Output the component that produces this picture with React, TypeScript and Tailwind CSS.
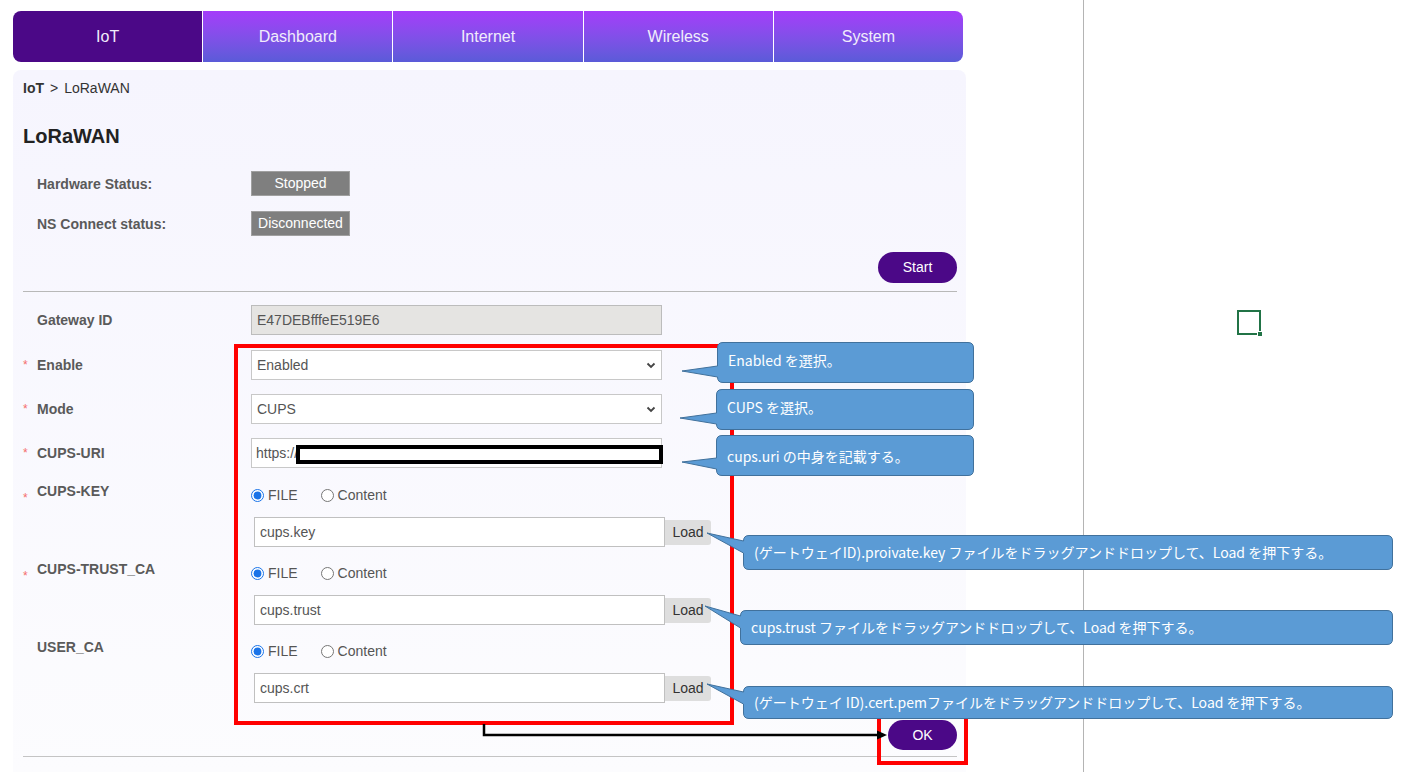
import type { ReactNode } from 'react';

const tabs = ['IoT', 'Dashboard', 'Internet', 'Wireless', 'System'];

const Nav = () => (
  <div className="flex h-[51px] w-[950px] overflow-hidden rounded-lg">
    {tabs.map((t, i) =>
      i === 0 ? (
        <div key={t} className="flex flex-1 items-center justify-center bg-[#4b0887] text-[16px] text-[#f1ecfb]">
          {t}
        </div>
      ) : (
        <div
          key={t}
          className="flex flex-1 items-center justify-center border-l border-white bg-linear-to-b from-[#a43bfa] to-[#5a5bd8] text-[16px] text-[#f1ecfb]"
        >
          {t}
        </div>
      )
    )}
  </div>
);

const Label = ({ text, req, low }: { text: string; req?: boolean; low?: boolean }) => (
  <div className={`flex w-[228px] shrink-0 ${low ? 'items-start' : 'items-center'}`}>
    <span className={`w-[14px] text-[12px] leading-4 text-[#f56c6c] ${low ? 'pt-[7px]' : ''}`}>{req ? '*' : ''}</span>
    <span className="text-[14px] font-bold leading-4 text-[#5a5a5a]">{text}</span>
  </div>
);

const Chevron = () => (
  <svg width="10" height="7" viewBox="0 0 10 7" className="mr-[5px]">
    <path d="M1.5 1.5 5 5l3.5-3.5" fill="none" stroke="#444" strokeWidth="1.8" />
  </svg>
);

const Select = ({ value }: { value: string }) => (
  <div className="flex h-[30px] w-[411px] items-center justify-between border border-[#c8c8c8] bg-white pl-[5px] text-[14px] text-[#555]">
    <span>{value}</span>
    <Chevron />
  </div>
);

const Radio = ({ checked, label, group }: { checked?: boolean; label: string; group: string }) => (
  <label className="flex items-center gap-[4px] text-[14px] text-[#555]">
    <input type="radio" defaultChecked={checked} name={group} className="m-0 h-[13px] w-[13px] accent-[#1a73e8]" />
    {label}
  </label>
);

const FileBlock = ({ label, req, file }: { label: string; req?: boolean; file: string }) => (
  <div className="flex">
    <div className="-mt-[4px]">
      <Label text={label} req={req} low />
    </div>
    <div className="flex flex-col">
      <div className="flex h-4 items-center gap-[23px]">
        <Radio checked label="FILE" group={label} />
        <Radio label="Content" group={label} />
      </div>
      <div className="ml-[3px] mt-[14px] flex items-center">
        <div className="flex h-[30px] w-[411px] items-center border border-[#c0c0c0] bg-white pl-[5px] text-[14px] text-[#555]">
          {file}
        </div>
        <div className="flex h-[25px] w-[46px] items-center justify-center rounded-r-[3px] bg-[#dedede] text-[14px] text-[#333]">
          Load
        </div>
      </div>
    </div>
  </div>
);

const Badge = ({ children }: { children: ReactNode }) => (
  <div className="flex h-[25px] w-[99px] items-center justify-center border border-[#a0a0a0] bg-[#7f7f7f] text-[14px] text-white">
    {children}
  </div>
);

type CalloutProps = {
  x: number;
  y: number;
  w: number;
  h: number;
  tip: [number, number];
  base: [number, number];
  children: ReactNode;
};

const Callout = ({ x, y, w, h, tip, base, children }: CalloutProps) => {
  const r = 6;
  const d = `M${r},0.5 H${w - r} Q${w - 0.5},0.5 ${w - 0.5},${r} V${h - r} Q${w - 0.5},${h - 0.5} ${w - r},${h - 0.5} H${r} Q0.5,${h - 0.5} 0.5,${h - r} V${base[1]} L${tip[0]},${tip[1]} L0.5,${base[0]} V${r} Q0.5,0.5 ${r},0.5 Z`;
  return (
    <div className="absolute" style={{ left: x, top: y, width: w, height: h }}>
      <svg className="absolute left-0 top-0 overflow-visible" width={w} height={h}>
        <path d={d} fill="#5b9bd5" stroke="#41719c" strokeWidth="1" />
      </svg>
      <div className="relative flex h-full items-center pl-[11px] font-['Noto_Sans_CJK_JP',sans-serif] text-[14px] text-white">
        {children}
      </div>
    </div>
  );
};

export default function App() {
  return (
    <div className="relative h-[772px] w-[1404px] overflow-hidden bg-white pl-[13px] pt-[11px] font-['Liberation_Sans',Arial,sans-serif]">
      <Nav />

      <div className="mt-[8px] h-[702px] w-[953px] rounded-t-lg bg-linear-to-b from-[#f6f5fe] to-[#fcfcfe] pl-[10px] pr-[9px] pt-[10px]">
        <div className="text-[14px] leading-4 text-[#333]">
          <span className="font-bold">IoT</span>
          <span className="mx-[6px]">&gt;</span>LoRaWAN
        </div>
        <div className="mt-[28px] text-[20px] font-bold leading-6 text-[#222]">LoRaWAN</div>

        <div className="mt-[23px] flex h-[25px] items-center">
          <Label text="Hardware Status:" />
          <Badge>Stopped</Badge>
        </div>
        <div className="mt-[15px] flex h-[25px] items-center">
          <Label text="NS Connect status:" />
          <Badge>Disconnected</Badge>
        </div>

        <div className="mt-[16px] flex justify-end">
          <div className="flex h-[31px] w-[79px] items-center justify-center rounded-full bg-[#4b0887] text-[14px] text-white">Start</div>
        </div>
        <div className="mt-[8px] h-px bg-[#b8b8b8]" />

        <div className="mt-[13px] flex h-[30px] items-center">
          <Label text="Gateway ID" />
          <div className="flex h-[30px] w-[411px] items-center border border-[#bcbcbc] bg-[#e5e4e2] pl-[5px] text-[14px] text-[#555]">
            E47DEBfffeE519E6
          </div>
        </div>
        <div className="mt-[15px] flex h-[30px] items-center">
          <Label text="Enable" req />
          <Select value="Enabled" />
        </div>
        <div className="mt-[14px] flex h-[30px] items-center">
          <Label text="Mode" req />
          <Select value="CUPS" />
        </div>
        <div className="mt-[14px] flex h-[30px] items-center">
          <Label text="CUPS-URI" req />
          <div className="flex h-[30px] w-[411px] items-center border border-[#c8c8c8] bg-white pl-[4px] text-[14px] text-[#555]">
            https://
          </div>
        </div>

        <div className="mt-[19px]">
          <FileBlock label="CUPS-KEY" req file="cups.key" />
        </div>
        <div className="mt-[18px]">
          <FileBlock label="CUPS-TRUST_CA" req file="cups.trust" />
        </div>
        <div className="mt-[18px]">
          <FileBlock label="USER_CA" file="cups.crt" />
        </div>

        <div className="mt-[17px] flex justify-end">
          <div className="flex h-[30px] w-[69px] items-center justify-center rounded-full bg-[#4b0887] text-[14px] text-white">OK</div>
        </div>
        <div className="mt-[6px] h-px bg-[#c4c4c4]" />
      </div>

      {/* sheet grid line + annotations */}
      <div className="absolute left-[1083px] top-0 h-full w-px bg-[#b4b4b4]" />
      <div className="absolute left-[296px] top-[445px] h-[19px] w-[367px] border-[4px] border-black bg-white" />
      <div className="absolute left-[234px] top-[344px] h-[381px] w-[500px] border-[4px] border-[#ff0000]" />
      <div className="absolute left-[877px] top-[700px] h-[65px] w-[91px] border-[4px] border-t-0 border-[#ff0000]" />
      <svg className="absolute left-[480px] top-[720px]" width="412" height="24">
        <path d="M4 4V15H398" fill="none" stroke="#000" strokeWidth="2.5" />
        <polygon points="397,10.5 407,15 397,19.5" fill="#000" />
      </svg>

      <Callout x={717} y={342} w={257} h={41} tip={[-35, 29]} base={[24, 35]}>
        <span className="-mt-[4px]">Enabled を選択。</span>
      </Callout>
      <Callout x={716} y={389} w={258} h={41} tip={[-36, 29]} base={[24, 35]}>
        <span className="-mt-[4px]">CUPS を選択。</span>
      </Callout>
      <Callout x={716} y={435} w={258} h={41} tip={[-34, 27]} base={[23, 34]}>
        <span className="mt-[2px]">cups.uri の中身を記載する。</span>
      </Callout>
      <Callout x={743} y={535} w={650} h={35} tip={[-36, -2]} base={[6, 18]}>
        (ゲートウェイID).proivate.key ファイルをドラッグアンドドロップして、Load を押下する。
      </Callout>
      <Callout x={740} y={610} w={653} h={35} tip={[-35, -4]} base={[6, 18]}>
        cups.trust ファイルをドラッグアンドドロップして、Load を押下する。
      </Callout>
      <Callout x={743} y={686} w={650} h={33} tip={[-36, -2]} base={[6, 18]}>
        (ゲートウェイ ID).cert.pemファイルをドラッグアンドドロップして、Load を押下する。
      </Callout>

      <div className="absolute left-[1237px] top-[310px] h-[25px] w-[24px] border-2 border-[#217346]" />
      <div className="absolute left-[1257px] top-[331px] h-[6px] w-[6px] border border-white bg-[#217346]" />
    </div>
  );
}
